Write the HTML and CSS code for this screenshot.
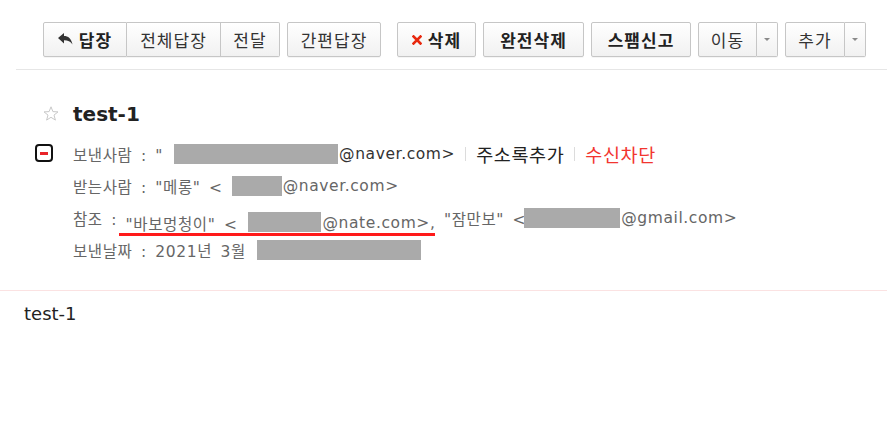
FILE: index.html
```html
<!DOCTYPE html>
<html lang="ko">
<head>
<meta charset="utf-8">
<link rel="stylesheet" href="styles.css">
</head>
<body>
<div class="toolbar">
  <div class="group">
    <span class="btn strong w-reply"><svg class="ico-reply" width="15" height="12" viewBox="0 0 15 12"><path d="M0 5 L6 0 L6 3 C10 3 13.5 5.5 14.5 11.5 C12.5 8.5 10 7.2 6 7.2 L6 10.5 Z" fill="#333"/></svg>답장</span>
    <span class="btn w-all">전체답장</span>
    <span class="btn w-fwd">전달</span>
  </div>
  <span class="btn w-quick">간편답장</span>
  <span class="btn strong w-del sep"><svg class="ico-x" width="10" height="10" viewBox="0 0 10 10"><path d="M1.5 1.5 L8.5 8.5 M8.5 1.5 L1.5 8.5" stroke="#e8280e" stroke-width="2.6" stroke-linecap="square"/></svg>삭제</span>
  <span class="btn strong w-perm">완전삭제</span>
  <span class="btn strong w-spam">스팸신고</span>
  <div class="group">
    <span class="btn w-move">이동</span>
    <span class="btn caret"><i class="tri"></i></span>
  </div>
  <div class="group">
    <span class="btn w-more">추가</span>
    <span class="btn caret"><i class="tri"></i></span>
  </div>
</div>

<div class="mail-head">
  <div class="title-row">
    <svg class="star" width="16" height="15" viewBox="0 0 16 15"><path d="M8 0.8 L9.9 5.6 L15 5.9 L11 9.1 L12.4 14.1 L8 11.3 L3.6 14.1 L5 9.1 L1 5.9 L6.1 5.6 Z" fill="none" stroke="#c8c8c8" stroke-width="1"/></svg>
    <h1 class="title">test-1</h1>
  </div>
  <div class="row first">
    <span class="toggle"><i></i></span>
    <span class="label">보낸사람 : "</span><span class="redact r-from"></span><span class="addr dark">@naver.com&gt;</span>
    <span class="bar"></span><span class="link">주소록추가</span>
    <span class="bar"></span><span class="link red">수신차단</span>
  </div>
  <div class="row">
    <span class="label">받는사람 : "메롱" &lt;</span><span class="redact r-to"></span><span class="addr">@naver.com&gt;</span>
  </div>
  <div class="row">
    <span class="label">참조 : </span><span class="marked">"바보멍청이" &lt;<span class="redact r-cc1"></span>@nate.com&gt;,</span><span class="label"> "잠만보" &lt;</span><span class="redact r-cc2"></span><span class="addr">@gmail.com&gt;</span>
  </div>
  <div class="row">
    <span class="label">보낸날짜 : 2021년 3월</span><span class="redact r-date"></span>
  </div>
</div>

<div class="mail-body">test-1</div>
</body>
</html>
```

FILE: styles.css
```css
html, body {
  margin: 0;
  padding: 0;
  background: #fff;
}
body {
  font-family: "DejaVu Sans", "Noto Sans CJK KR", sans-serif;
  color: #333;
}

/* toolbar */
.toolbar {
  display: flex;
  align-items: center;
  margin-left: 16px;
  padding: 22px 0 12px 27px;
  border-bottom: 1px solid #e6e6e6;
  gap: 7px;
}
.group {
  display: flex;
}
.btn {
  box-sizing: border-box;
  height: 35px;
  display: flex;
  align-items: center;
  justify-content: center;
  gap: 6px;
  border: 1px solid #c6c6c6;
  border-radius: 2px;
  background: linear-gradient(#ffffff, #f1f1f1);
  font-family: "Noto Sans CJK KR", sans-serif;
  font-size: 17px;
  letter-spacing: 1px;
  color: #333;
  box-shadow: 0 1px 0 rgba(0,0,0,0.04);
}
.group .btn + .btn {
  border-left: none;
  border-top-left-radius: 0;
  border-bottom-left-radius: 0;
}
.group .btn:not(:last-child) {
  border-top-right-radius: 0;
  border-bottom-right-radius: 0;
}
.strong {
  font-weight: 700;
  color: #222;
}
.sep { margin-left: 9px; }
.w-reply { width: 84px; }
.w-all { width: 94px; }
.w-fwd { width: 59px; }
.w-quick { width: 94px; }
.w-del { width: 79px; }
.w-perm { width: 101px; }
.w-spam { width: 100px; }
.w-move { width: 59px; }
.w-more { width: 60px; }
.caret { width: 21px; }
.tri {
  width: 0;
  height: 0;
  border-left: 3px solid transparent;
  border-right: 3px solid transparent;
  border-top: 3px solid #8a8a8a;
}
.ico-reply { margin-top: -2px; }

/* header */
.mail-head {
  padding: 29px 0 24px 0;
  border-bottom: 1px solid #fbe2e2;
}
.title-row {
  display: flex;
  align-items: center;
  height: 30px;
  padding-left: 43px;
  margin-bottom: 9px;
}
.star { margin-right: 14px; margin-top: -2px; }
.title {
  margin: 0;
  font-family: "DejaVu Sans", sans-serif;
  font-size: 20px;
  font-weight: 700;
  color: #222;
  line-height: 30px;
}
.row {
  display: flex;
  align-items: center;
  height: 32px;
  padding-left: 73px;
  font-size: 15.5px;
  letter-spacing: 0.6px;
  word-spacing: 3px;
  color: #666;
  white-space: pre;
}
.row.first {
  padding-left: 35px;
}
.toggle {
  box-sizing: border-box;
  width: 18px;
  height: 18px;
  border: 2px solid #111;
  border-radius: 4px;
  margin-right: 20px;
  margin-top: -2px;
  display: flex;
  align-items: center;
  justify-content: center;
}
.toggle i {
  width: 8px;
  height: 3px;
  background: #e8242a;
}
.redact {
  display: inline-block;
  height: 20px;
  background: #aaaaaa;
}
.r-from { width: 164px; margin-left: 11px; margin-right: 1px; }
.r-to { width: 50px; margin-left: 9px; margin-right: 1px; }
.r-cc1 { width: 73px; margin-left: 11px; margin-right: 1px; vertical-align: middle; margin-top: -2px; }
.r-cc2 { width: 96px; margin-left: -2px; margin-right: 1px; }
.r-date { width: 164px; margin-left: 11px; }
.addr.dark { color: #333; }
.marked {
  display: flex;
  align-items: center;
  border-bottom: 3px solid #ff1a1a;
  margin-left: -7px;
  padding-left: 7px;
  margin-right: -3px;
  margin-top: 13px;
  height: 19px;
}
.marked + .label { margin-left: 3px; }
.bar {
  width: 1px;
  height: 14px;
  background: #dcdcdc;
  margin: 0 10px 0 10px;
}
.link {
  font-family: "Noto Sans CJK KR", sans-serif;
  font-size: 18.5px;
  letter-spacing: 0.6px;
  color: #222;
}
.link.red { color: #f2352f; }

/* body */
.mail-body {
  padding: 12px 24px;
  font-size: 18px;
  line-height: 22px;
  color: #222;
}
```
